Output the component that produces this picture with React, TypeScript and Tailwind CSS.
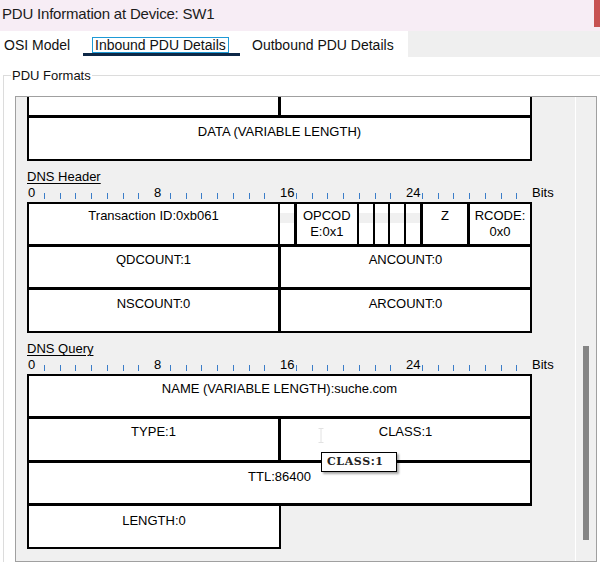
import type { ReactNode } from 'react'

const bitLabels: Record<number, string> = { 0: '0', 8: '8', 16: '16', 24: '24' }

// bit ruler drawn above each header format
function Ruler() {
  return (
    <div className="grid h-[17px] grid-cols-[repeat(32,15.75px)_auto] items-start">
      {Array.from({ length: 32 }, (_, i) =>
        bitLabels[i] !== undefined ? (
          <span key={i} className="pl-[1px] leading-4">
            {bitLabels[i]}
          </span>
        ) : (
          <span key={i} className="ml-[1px] mt-[8px] h-[6px] w-px bg-[#3b7dc8]" />
        )
      )}
      <span className="pl-[1px] leading-4">Bits</span>
    </div>
  )
}

function SectionTitle({ children }: { children: ReactNode }) {
  return <div className="mt-[8px] leading-4 underline underline-offset-2">{children}</div>
}

// narrow flag cell, empty label gives a grey band
function FlagCell() {
  return (
    <div className="border-l-2 border-black">
      <div className="mt-[9px] h-[10px] bg-[#f0f0f0]" />
    </div>
  )
}

// columns follow the 32 bit ruler, first one shortened by the outer border
const bitGrid = 'grid grid-cols-[12.75px_repeat(31,15.75px)]'

export default function App() {
  return (
    <div className="h-[562px] w-[600px] overflow-hidden bg-white font-['Liberation_Sans',Arial,sans-serif] text-black">
      {/* Title bar */}
      <div className="flex h-[31px] justify-between bg-[#f7edf5]">
        <div className="pl-[2px] pt-[4px] text-[15px] leading-[20px] tracking-[-0.2px] text-[#1b1b1b]">
          PDU Information at Device: SW1
        </div>
        <div className="h-[27px] w-[6px] bg-[#c75252]" />
      </div>

      {/* Tabs */}
      <div className="flex h-[26px] text-[14px] leading-[14px] text-[#111]">
        <div className="flex w-[408px]">
          <div className="w-[83px] pl-[4px] pt-[7px]">OSI Model</div>
          <div className="h-[25px] w-[157px] border-b-[3px] border-[#0d2847] pl-[9px] pt-[6px]">
            <span className="inline-block border border-[#1e9ad6] px-[2px]">Inbound PDU Details</span>
          </div>
          <div className="pl-[12px] pt-[7px]">Outbound PDU Details</div>
        </div>
        <div className="flex-1 bg-[#efefef]" />
      </div>

      {/* Group box */}
      <fieldset className="ml-[3px] mt-[11px] w-[620px] min-w-0 border border-[#dcdcdc] pl-[11px]">
        <legend className="-ml-[4px] px-[1px] text-[13px] leading-[15px] text-[#111]">PDU Formats</legend>

        <div className="mt-[13px] flex h-[466px] w-[582px] border border-[#a0a0a0] bg-[#f0f0f0]">
          {/* scrolled content */}
          <div className="flex-1 overflow-hidden pl-[11px] text-[13px] leading-4">
            {/* tail of the previous format */}
            <div className="w-[505px] border-x-2 border-b-2 border-black bg-white">
              <div className={`${bitGrid} h-[21px] border-b-[3px] border-black`}>
                <div className="col-span-16" />
                <div className="col-span-16 border-l-[3px] border-black" />
              </div>
              <div className="h-[41px] pt-[6px] text-center">DATA (VARIABLE LENGTH)</div>
            </div>

            <SectionTitle>DNS Header</SectionTitle>
            <Ruler />
            <div className="w-[505px] border-2 border-black bg-white">
              <div className={`${bitGrid} h-[43px] border-b-[3px] border-black`}>
                <div className="col-span-16 pt-[4px] text-center">Transaction ID:0xb061</div>
                <FlagCell />
                <div className="col-span-4 border-l-[3px] border-black pt-[4px] text-center">
                  OPCOD
                  <br />
                  E:0x1
                </div>
                <FlagCell />
                <FlagCell />
                <FlagCell />
                <FlagCell />
                <div className="col-span-3 border-l-[3px] border-black pt-[4px] text-center">Z</div>
                <div className="col-span-4 border-l-[3px] border-black pt-[4px] text-center">
                  RCODE:
                  <br />
                  0x0
                </div>
              </div>
              <div className={`${bitGrid} h-[43px] border-b-[3px] border-black`}>
                <div className="col-span-16 pt-[5px] text-center">QDCOUNT:1</div>
                <div className="col-span-16 border-l-[3px] border-black pt-[5px] text-center">ANCOUNT:0</div>
              </div>
              <div className={`${bitGrid} h-[41px]`}>
                <div className="col-span-16 pt-[6px] text-center">NSCOUNT:0</div>
                <div className="col-span-16 border-l-[3px] border-black pt-[6px] text-center">ARCOUNT:0</div>
              </div>
            </div>

            <SectionTitle>DNS Query</SectionTitle>
            <Ruler />
            <div className="w-[505px] border-x-2 border-t-2 border-b-[3px] border-black bg-white">
              <div className="h-[43px] border-b-[3px] border-black pt-[5px] text-center">
                NAME (VARIABLE LENGTH):suche.com
              </div>
              <div className={`${bitGrid} h-[44px] border-b-[3px] border-black`}>
                <div className="col-span-16 pt-[5px] text-center">TYPE:1</div>
                <div className="relative col-span-16 border-l-[3px] border-black pt-[5px] text-center">
                  CLASS:1
                  <svg className="absolute left-[37px] top-[9px]" width="6" height="15" viewBox="0 0 6 15">
                    <path d="M0.5 0.5h5M3 0.5v14M0.5 14.5h5" stroke="#e2e2e2" strokeWidth="1" fill="none" />
                  </svg>
                  <div className="absolute left-[40px] top-[33px] z-10 h-[20px] w-[76px] border border-black bg-white pl-[5px] text-left font-['DejaVu_Serif',serif] text-[11px] font-bold leading-[18px] tracking-[0.6px] text-[#222] shadow-[2px_2px_2px_rgba(0,0,0,0.35)]">
                    CLASS:1
                  </div>
                </div>
              </div>
              <div className="h-[40px] pt-[6px] text-center">TTL:86400</div>
            </div>
            <div className="h-[43px] w-[254px] border-x-2 border-b-2 border-black bg-white pt-[7px] text-center">
              LENGTH:0
            </div>
          </div>

          {/* vertical scrollbar */}
          <div className="w-[21px] border-l border-white pl-[7px] pt-[249px]">
            <div className="h-[194px] w-[6px] bg-[#858585]" />
          </div>
        </div>
      </fieldset>
    </div>
  )
}
